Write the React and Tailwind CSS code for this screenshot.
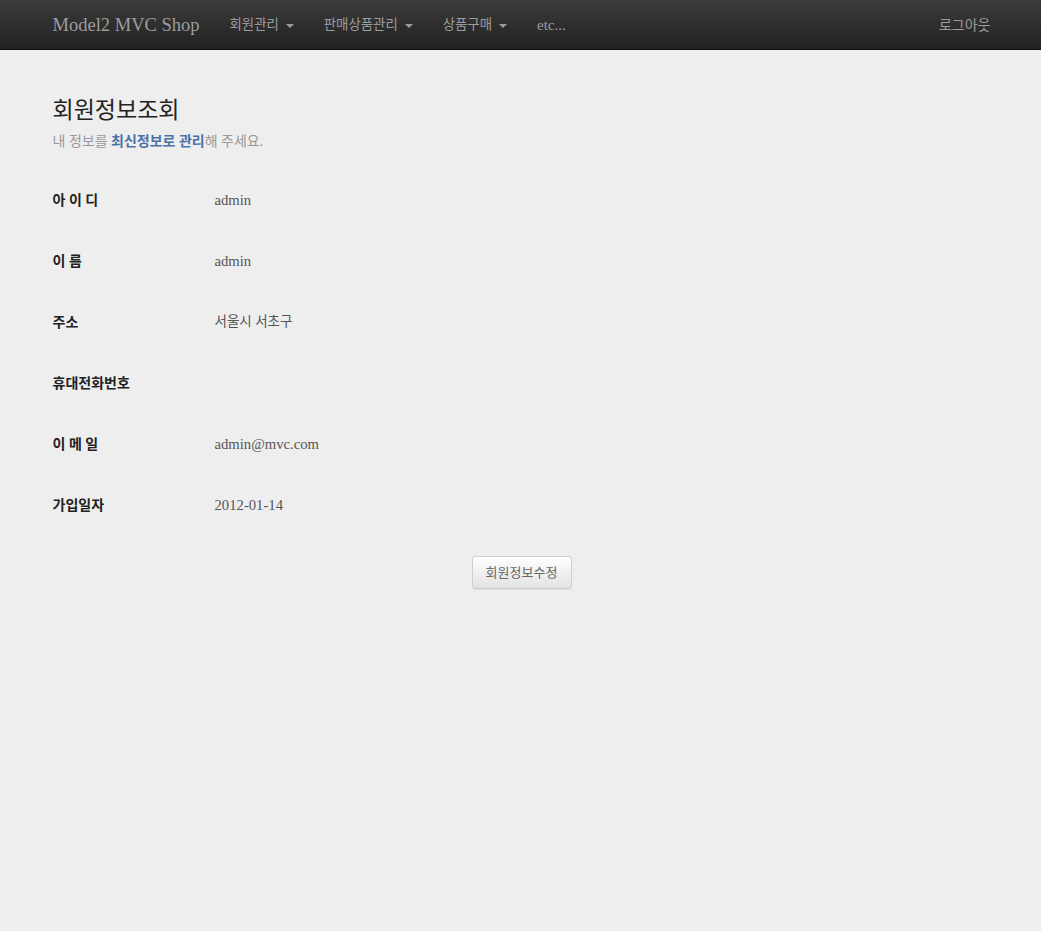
import React from "react";

const FONT = {
  fontFamily: '"Liberation Serif", "Noto Sans CJK KR", serif',
};

function Caret() {
  return (
    <span className="ml-[7px] inline-block h-0 w-0 border-x-[4px] border-t-[4px] border-x-transparent border-t-[#9d9d9d] align-middle" />
  );
}

const rows = [
  ["아 이 디", "admin"],
  ["이 름", "admin"],
  ["주소", "서울시 서초구", true],
  ["휴대전화번호", ""],
  ["이 메 일", "admin@mvc.com"],
  ["가입일자", "2012-01-14"],
];

export default function App() {
  return (
    <div className="min-h-[931px] w-full bg-[#eeeeee] text-[#333]" style={FONT}>
      {/* navbar */}
      <nav className="h-[50px] border-b border-[#111] bg-gradient-to-b from-[#3c3c3c] to-[#222]">
        <div className="mx-auto flex h-full w-[970px] items-center pl-[17px] pr-[15px] pt-[2px]">
          <a className="pr-[15px] text-[18.5px] text-[#9d9d9d]">Model2 MVC Shop</a>
          <ul className="flex items-center text-[13.4px] text-[#9d9d9d]">
            <li className="px-[15px]">회원관리<Caret /></li>
            <li className="px-[15px]">판매상품관리<Caret /></li>
            <li className="px-[15px]">상품구매<Caret /></li>
            <li className="px-[15px] text-[15px]">etc...</li>
          </ul>
          <div className="ml-auto text-[14px] text-[#9d9d9d]">로그아웃</div>
        </div>
      </nav>

      <div className="mx-auto w-[970px] pl-[17px] pr-[15px]">
        {/* header */}
        <div className="pt-[48px]">
          <h3 className="text-[23px] leading-[26px] text-[#222]">회원정보조회</h3>
          <h5 className="mt-[9px] text-[14px] leading-[18px] text-[#999]">
            내 정보를 <strong className="font-bold text-[#4a72a8]">최신정보로 관리</strong>해 주세요.
          </h5>
        </div>

        {/* rows */}
        <div className="mt-[39px] flex flex-col gap-[41px]">
          {rows.map(([label, value, ko]) => (
            <div key={label} className="flex h-[20px] items-center">
              <div className="w-[162px] text-[14px] font-bold text-[#222]">{label}</div>
              <div className={ko ? "text-[13.5px] text-[#555]" : "text-[14.7px] text-[#555]"}>{value}</div>
            </div>
          ))}
        </div>

        <div className="mt-[41px] flex justify-center">
          <button className="h-[33px] w-[100px] rounded-[3px] border border-[#cfcfcf] bg-gradient-to-b from-white to-[#e3e3e3] text-[13px] text-[#666] shadow-[0_1px_1px_rgba(0,0,0,0.08)]">
            회원정보수정
          </button>
        </div>
      </div>
    </div>
  );
}
